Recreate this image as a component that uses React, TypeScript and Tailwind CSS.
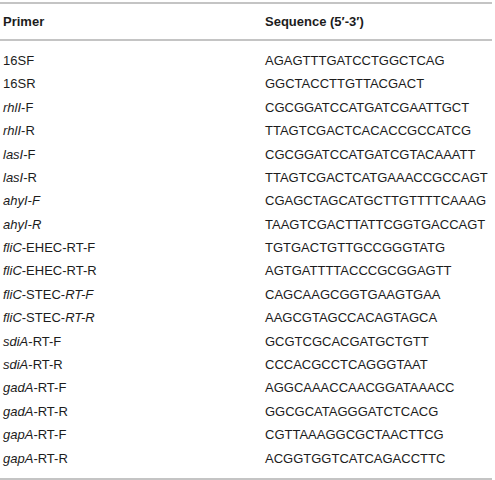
import React from "react"

type Row = { name: React.ReactNode; seq: string }

const rows: Row[] = [
  { name: "16SF", seq: "AGAGTTTGATCCTGGCTCAG" },
  { name: "16SR", seq: "GGCTACCTTGTTACGACT" },
  { name: <><i>rhlI</i>-F</>, seq: "CGCGGATCCATGATCGAATTGCT" },
  { name: <><i>rhlI</i>-R</>, seq: "TTAGTCGACTCACACCGCCATCG" },
  { name: <><i>lasI</i>-F</>, seq: "CGCGGATCCATGATCGTACAAATT" },
  { name: <><i>lasI</i>-R</>, seq: "TTAGTCGACTCATGAAACCGCCAGT" },
  { name: <i>ahyI-F</i>, seq: "CGAGCTAGCATGCTTGTTTTCAAAG" },
  { name: <i>ahyI-R</i>, seq: "TAAGTCGACTTATTCGGTGACCAGT" },
  { name: <><i>fliC</i>-EHEC-RT-F</>, seq: "TGTGACTGTTGCCGGGTATG" },
  { name: <><i>fliC</i>-EHEC-RT-R</>, seq: "AGTGATTTTACCCGCGGAGTT" },
  { name: <><i>fliC</i>-STEC-<i>RT-F</i></>, seq: "CAGCAAGCGGTGAAGTGAA" },
  { name: <><i>fliC</i>-STEC-<i>RT-R</i></>, seq: "AAGCGTAGCCACAGTAGCA" },
  { name: <><i>sdiA</i>-RT-F</>, seq: "GCGTCGCACGATGCTGTT" },
  { name: <><i>sdiA</i>-RT-R</>, seq: "CCCACGCCTCAGGGTAAT" },
  { name: <><i>gadA</i>-RT-F</>, seq: "AGGCAAACCAACGGATAAACC" },
  { name: <><i>gadA</i>-RT-R</>, seq: "GGCGCATAGGGATCTCACG" },
  { name: <><i>gapA</i>-RT-F</>, seq: "CGTTAAAGGCGCTAACTTCG" },
  { name: <><i>gapA</i>-RT-R</>, seq: "ACGGTGGTCATCAGACCTTC" },
]

export default function App() {
  return (
    <div className="min-h-screen bg-white pt-[2px] font-['Liberation_Sans',Arial,sans-serif] text-[13px] text-[#1c1c1c]">
      <div className="w-[492px]">
        <div className="h-[2px] bg-[#c4c4c4]" />
        <div className="grid h-[35px] grid-cols-[265px_1fr] items-center font-bold">
          <div className="pl-[3px]">Primer</div>
          <div>Sequence (5′-3′)</div>
        </div>
        <div className="h-[2px] bg-[#c4c4c4]" />
        <div className="py-[8px]">
          {rows.map((r, i) => (
            <div key={i} className="grid h-[23.4px] grid-cols-[265px_1fr] items-center">
              <div className="pl-[3px]">{r.name}</div>
              <div>{r.seq}</div>
            </div>
          ))}
        </div>
        <div className="h-[2px] bg-[#c4c4c4]" />
      </div>
    </div>
  )
}
